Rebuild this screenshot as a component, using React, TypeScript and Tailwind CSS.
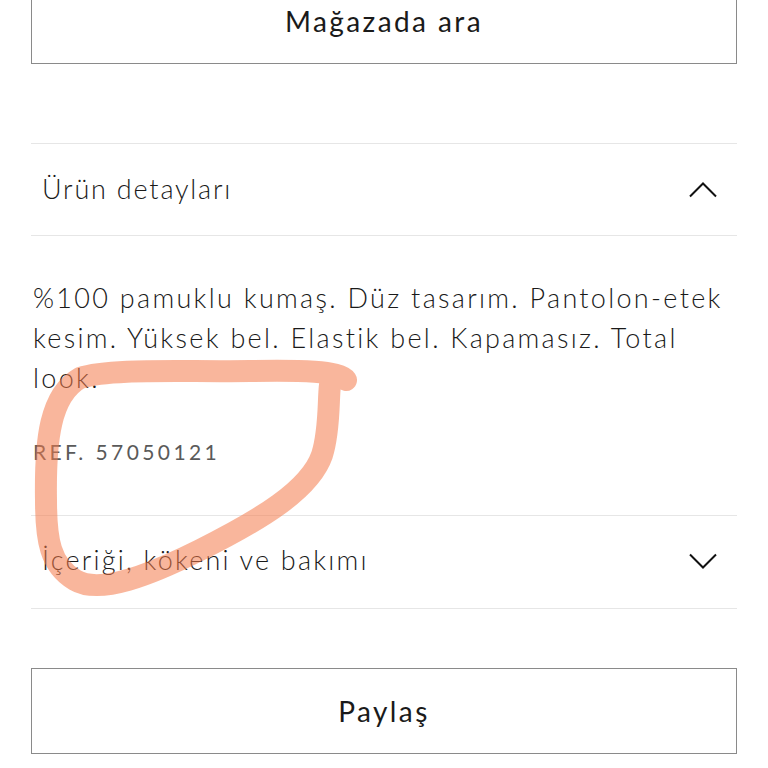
const font = { fontFamily: 'Lato, "Noto Sans", sans-serif' };

function Chevron({ up }: { up?: boolean }) {
  return (
    <svg width="28" height="16" viewBox="0 0 28 16" fill="none" stroke="#111" strokeWidth="2">
      {up ? <polyline points="1,14.5 14,1.5 27,14.5" /> : <polyline points="1,1.5 14,14.5 27,1.5" />}
    </svg>
  );
}

export default function App() {
  return (
    <div className="relative w-[768px] h-[768px] overflow-hidden bg-white text-[#1a1a1a]" style={font}>
      <div className="px-[31px]">
        {/* Store search button */}
        <button className="-mt-[22px] flex h-[86px] w-full items-center justify-center border border-[#8a8a8a] text-[28px] font-normal tracking-[2.4px]">
          Mağazada ara
        </button>

        <div className="mt-[79px] border-t border-[#e6e6e6]" />

        {/* Ürün detayları */}
        <div className="flex h-[91px] items-center justify-between pl-[11px] pr-[20px]">
          <span className="text-[27px] font-light tracking-[1.8px]">Ürün detayları</span>
          <Chevron up />
        </div>
        <div className="border-t border-[#e6e6e6]" />

        <div className="pt-[42px] pb-[49px] pl-[2px] pr-[10px]">
          <p className="text-[27px] font-light leading-[40px] tracking-[2.3px]">
            %100 pamuklu kumaş. Düz tasarım. Pantolon-etek kesim. Yüksek bel. Elastik bel. Kapamasız. Total look.
          </p>
          <p className="mt-[40px] text-[21px] font-normal leading-[28px] tracking-[3.4px] text-[#5a5a5a]">REF. 57050121</p>
        </div>
        <div className="border-t border-[#e6e6e6]" />

        {/* İçeriği, kökeni ve bakımı */}
        <div className="flex h-[92px] items-center justify-between pl-[11px] pr-[20px] pb-[3px]">
          <span className="text-[27px] font-light tracking-[2.2px]">İçeriği, kökeni ve bakımı</span>
          <Chevron />
        </div>
        <div className="border-t border-[#e6e6e6]" />

        <button className="mt-[59px] flex h-[86px] w-full items-center justify-center border border-[#8a8a8a] text-[28px] font-normal tracking-[2.4px]">
          Paylaş
        </button>
      </div>

      {/* hand-drawn marker loop */}
      <svg className="pointer-events-none absolute left-0 top-0" width="768" height="768" viewBox="0 0 768 768">
        <path
          d="M 346 380 C 340 371, 300 370, 250 371 C 180 372, 110 368, 80 378 C 50 395, 45 440, 46 500 C 46 540, 50 565, 75 580 C 100 595, 150 575, 200 550 C 260 520, 310 490, 322 455 C 330 430, 328 400, 330 385"
          fill="none"
          stroke="#f47a4a"
          strokeOpacity="0.55"
          strokeWidth="22"
          strokeLinecap="round"
          strokeLinejoin="round"
        />
      </svg>
    </div>
  );
}
